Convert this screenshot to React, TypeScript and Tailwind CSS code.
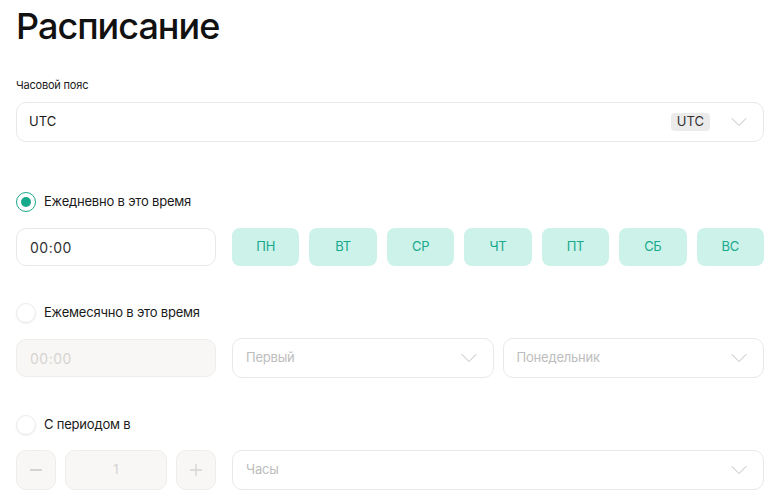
import React from "react";

const Chevron = ({ className = "" }: { className?: string }) => (
  <svg width="16" height="10" viewBox="0 0 16 10" fill="none" className={className}>
    <path d="M1 1.5L8 8.5L15 1.5" stroke="currentColor" strokeWidth="1" strokeLinecap="round" strokeLinejoin="round" />
  </svg>
);

const Radio = ({ checked, label }: { checked?: boolean; label: string }) => (
  <div className="flex items-center h-[20px]">
    {checked ? (
      <div className="w-[20px] h-[20px] rounded-full border-[1.5px] border-[#17a98b] flex items-center justify-center bg-white">
        <div className="w-[10px] h-[10px] rounded-full bg-[#17a98b]" />
      </div>
    ) : (
      <div className="w-[20px] h-[20px] rounded-full border border-[#ebebeb] bg-white shadow-[0_1px_2px_rgba(0,0,0,0.06)]" />
    )}
    <span className="ml-[8px] text-[13px] text-[#1a1a1a] tracking-[-0.2px]">{label}</span>
  </div>
);

const Select = ({ text, className = "", muted }: { text: string; className?: string; muted?: boolean }) => (
  <div className={`h-[40px] rounded-[10px] border border-[#e8e8e8] bg-white flex items-center pl-[13px] pr-[16px] ${className}`}>
    <span className={`flex-1 text-[13px] tracking-[-0.2px] ${muted ? "text-[#bdbdbd]" : "text-[#1a1a1a]"}`}>{text}</span>
    <Chevron className="text-[#bdbdbd]" />
  </div>
);

export default function App() {
  const days = ["ПН", "ВТ", "СР", "ЧТ", "ПТ", "СБ", "ВС"];
  return (
    <div className="w-[774px] h-[500px] bg-white pl-[16px] pr-[10px] overflow-hidden" style={{ fontFamily: "Inter, 'Noto Sans', sans-serif" }}>
      <h1 className="text-[36px] leading-[44px] font-medium text-[#111] tracking-[-1px] pt-[4px]">Расписание</h1>
      <div className="mt-[30px] text-[11px] leading-[14px] text-[#1a1a1a] tracking-[-0.2px]">Часовой пояс</div>
      <div className="mt-[10px] h-[40px] rounded-[10px] border border-[#e8e8e8] bg-white flex items-center pl-[12px] pr-[16px]">
        <span className="flex-1 text-[13px] text-[#1a1a1a]">UTC</span>
        <span className="bg-[#ebebeb] rounded-[4px] px-[6px] h-[18px] flex items-center text-[13px] text-[#333] mr-[21px]">UTC</span>
        <Chevron className="text-[#bdbdbd]" />
      </div>

      <div className="mt-[50px]">
        <Radio checked label="Ежедневно в это время" />
      </div>
      <div className="mt-[16px] flex items-center">
        <div className="w-[200px] h-[38px] rounded-[10px] border border-[#e8e8e8] bg-white flex items-center pl-[13px] text-[14px] text-[#333] tracking-[0.5px]">00:00</div>
        <div className="ml-[16px] flex-1 flex gap-[10px]">
          {days.map((d) => (
            <div key={d} className="flex-1 h-[38px] rounded-[8px] bg-[#cdf2ea] flex items-center justify-center text-[13px] text-[#17a98b] tracking-[-0.3px]">
              {d}
            </div>
          ))}
        </div>
      </div>

      <div className="mt-[37px]">
        <Radio label="Ежемесячно в это время" />
      </div>
      <div className="mt-[15px] flex items-center">
        <div className="w-[200px] h-[38px] rounded-[10px] border border-[#efedea] bg-[#f8f7f5] flex items-center pl-[13px] text-[14px] text-[#d6d4d1] tracking-[0.5px]">00:00</div>
        <div className="ml-[16px] flex-1 flex gap-[9px]">
          <Select text="Первый" muted className="flex-1 h-[40px]" />
          <Select text="Понедельник" muted className="flex-1 h-[40px]" />
        </div>
      </div>

      <div className="mt-[37px]">
        <Radio label="С периодом в" />
      </div>
      <div className="mt-[15px] flex items-center">
        <div className="w-[200px] flex gap-[9px] h-[40px]">
          <div className="w-[40px] rounded-[10px] border border-[#efedea] bg-[#f8f7f5] flex items-center justify-center">
            <div className="w-[12px] h-[1.5px] bg-[#d6d4d1]" />
          </div>
          <div className="flex-1 rounded-[10px] border border-[#efedea] bg-[#f8f7f5] flex items-center justify-center text-[13px] text-[#d6d4d1]">1</div>
          <div className="w-[40px] rounded-[10px] border border-[#efedea] bg-[#f8f7f5] flex items-center justify-center">
            <svg width="14" height="14" viewBox="0 0 14 14"><path d="M7 1V13M1 7H13" stroke="#d6d4d1" strokeWidth="1.3" /></svg>
          </div>
        </div>
        <div className="ml-[16px] flex-1">
          <Select text="Часы" muted />
        </div>
      </div>
    </div>
  );
}
